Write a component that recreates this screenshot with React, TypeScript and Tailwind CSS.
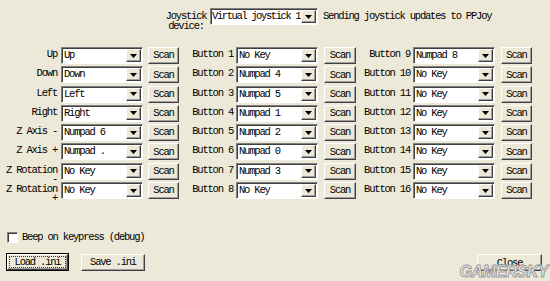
import React from "react";

const left = [
  ["Up", "Up"],
  ["Down", "Down"],
  ["Left", "Left"],
  ["Right", "Right"],
  ["Z Axis -", "Numpad 6"],
  ["Z Axis +", "Numpad ."],
  ["Z Rotation\n-", "No Key"],
  ["Z Rotation\n+", "No Key"],
];
const mid = ["No Key", "Numpad 4", "Numpad 5", "Numpad 1", "Numpad 2", "Numpad 0", "Numpad 3", "No Key"];
const right = ["Numpad 8", "No Key", "No Key", "No Key", "No Key", "No Key", "No Key", "No Key"];

function Arrow() {
  return (
    <div className="relative z-10 h-full w-[15px] shrink-0 bg-[#ECE9D8] border-t border-l border-t-white border-l-white border-b border-r border-b-[#404040] border-r-[#404040] shadow-[inset_-1px_-1px_0_#A0A0A0] flex items-center justify-center">
      <svg width="7" height="4" viewBox="0 0 7 4">
        <path d="M0 0 L7 0 L3.5 4 Z" fill="#000" />
      </svg>
    </div>
  );
}

function Combo({ value, w, tight = false }: { value: string; w: string; tight?: boolean }) {
  return (
    <div className={`${w} h-[17px] shrink-0 bg-white border-t border-l border-t-[#808080] border-l-[#808080] border-b border-r border-b-white border-r-white shadow-[inset_1px_1px_0_#404040] flex items-stretch overflow-hidden`}>
      <div className={`flex-1 min-w-0 leading-[15px] whitespace-nowrap overflow-visible ${tight ? "pl-[1px] tracking-[-1.4px]" : "pl-[2px]"}`}>{value}</div>
      <div className="p-[1px] pl-0 flex">
        <Arrow />
      </div>
    </div>
  );
}

function Btn({ children, w, extra = "" }: { children: React.ReactNode; w: string; extra?: string }) {
  return (
    <div className={`${w} h-[17px] shrink-0 bg-[#ECE9D8] border-t border-l border-t-white border-l-white border-b border-r border-b-[#404040] border-r-[#404040] shadow-[inset_-1px_-1px_0_#A0A0A0] flex items-center justify-center leading-none ${extra}`}>
      {children}
    </div>
  );
}

function Label({ text, w }: { text: string; w: string }) {
  return (
    <div className={`${w} shrink-0 h-[17px] text-right pr-[1px] leading-[9px] pt-[3px] overflow-visible whitespace-pre-line`}>
      {text}
    </div>
  );
}

export default function App() {
  return (
    <div
      className="relative w-[550px] h-[281px] bg-[#ECE9D8] text-black text-[10.5px] tracking-[-1.2px] overflow-hidden"
      style={{ fontFamily: '"Liberation Mono", "DejaVu Sans Mono", monospace' }}
    >
      <div className="flex items-start pt-[8px] pl-[162px]">
        <div className="w-[48px] h-[18px] mt-[3px] text-center leading-[10px] overflow-hidden">
          Joystick device:
        </div>
        <Combo value="Virtual joystick 1" w="w-[108px]" tight />
        <div className="ml-[5px] leading-[16px]">Sending joystick updates to PPJoy</div>
      </div>

      <div className="flex flex-col gap-[2.3px] mt-[18px]">
        {left.map(([lbl, val], i) => (
          <div key={i} className="flex items-start h-[17px]">
            <Label text={lbl} w="w-[58px]" />
            <div className="ml-[3px]">
              <Combo value={val} w="w-[82px]" />
            </div>
            <div className="ml-[5px]">
              <Btn w="w-[31px]">Scan</Btn>
            </div>
            <Label text={`Button ${i + 1}`} w="w-[55px]" />
            <div className="ml-[2px]">
              <Combo value={mid[i]} w="w-[82px]" />
            </div>
            <div className="ml-[6px]">
              <Btn w="w-[32px]">Scan</Btn>
            </div>
            <Label text={`Button ${i + 9}`} w="w-[55px]" />
            <div className="ml-[2px]">
              <Combo value={right[i]} w="w-[82px]" />
            </div>
            <div className="ml-[6px]">
              <Btn w="w-[31px]">Scan</Btn>
            </div>
          </div>
        ))}
      </div>

      <div className="flex items-center mt-[33px] pl-[7px]">
        <div className="w-[11px] h-[11px] bg-white border-t border-l border-t-[#808080] border-l-[#808080] border-b border-r border-b-white border-r-white shadow-[inset_1px_1px_0_#404040]" />
        <div className="ml-[4px] leading-[11px]">Beep on keypress (debug)</div>
      </div>

      <div className="flex items-start mt-[10px] pl-[6px] pr-[8px]">
        <div className="w-[63px] h-[18px] border border-black">
          <Btn w="w-full" extra="h-full p-[1px]">
            <div className="w-full h-full border border-dotted border-[#333] flex items-center justify-center leading-none">
              Load .ini
            </div>
          </Btn>
        </div>
        <div className="ml-[12px] mt-[1px]">
          <Btn w="w-[64px]">Save .ini</Btn>
        </div>
        <div className="flex-1" />
        <div className="mt-[1px]">
          <Btn w="w-[65px]" extra="items-start pt-[3px]">Close</Btn>
        </div>
      </div>

      <div
        className="absolute right-[2px] bottom-[1px] text-[16px] leading-none font-bold italic tracking-[-0.5px] text-[#f4f4f4] pointer-events-none"
        style={{ fontFamily: '"Liberation Sans", Arial, sans-serif', WebkitTextStroke: "1px #9a9a9a" }}
      >
        GAMERSKY
      </div>
    </div>
  );
}
